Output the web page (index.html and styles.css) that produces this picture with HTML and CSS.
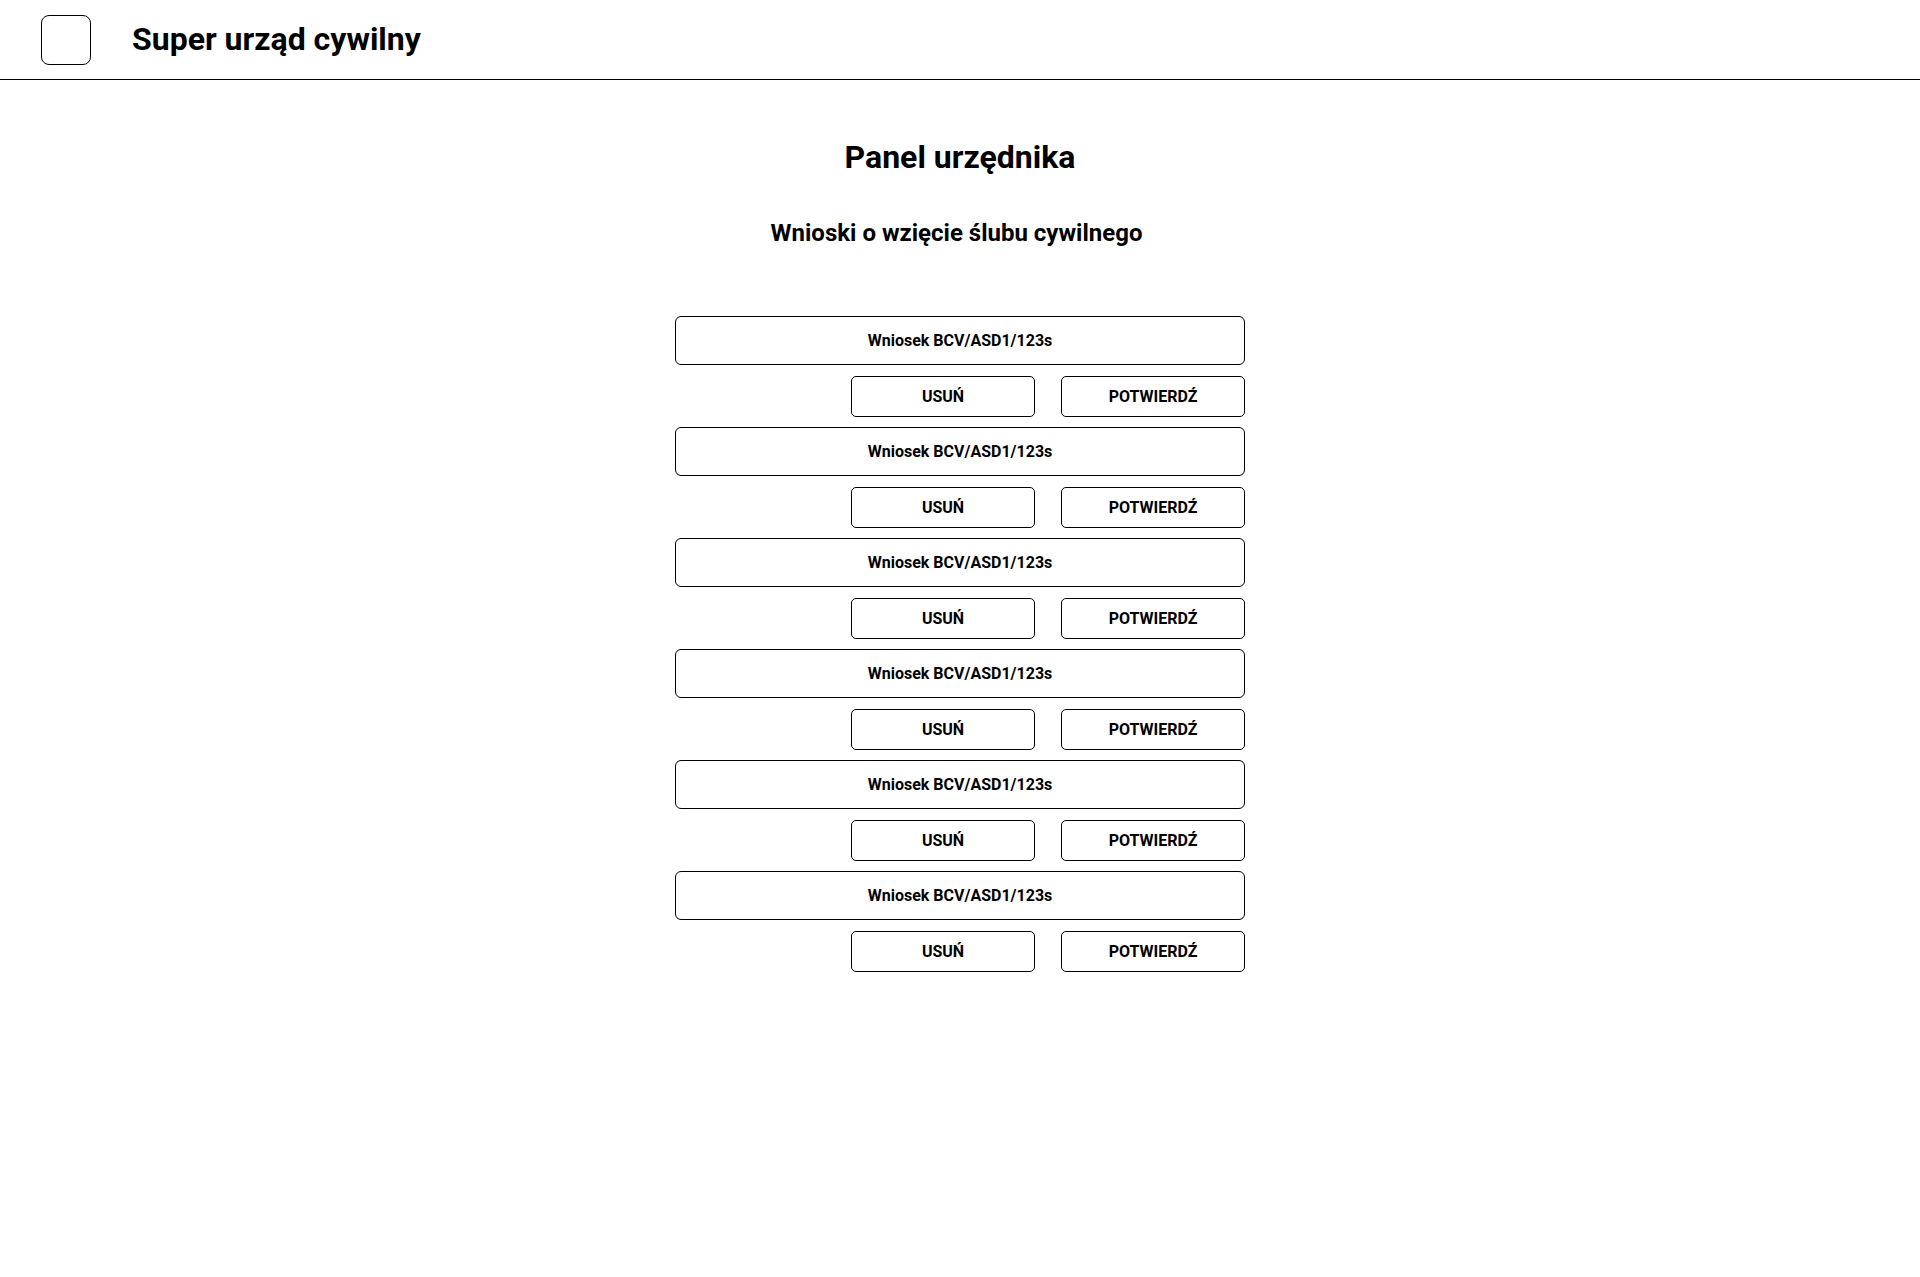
FILE: index.html
```html
<!DOCTYPE html>
<html lang="pl">
<head>
<meta charset="utf-8">
<title>Super urząd cywilny</title>
<link rel="stylesheet" href="styles.css">
</head>
<body>
<header class="topbar">
  <div class="logo"></div>
  <div class="brand">Super urząd cywilny</div>
</header>
<main class="main">
  <h1 class="title">Panel urzędnika</h1>
  <h2 class="subtitle">Wnioski o wzięcie ślubu cywilnego</h2>
  <div class="list">
    <div class="item"><div class="request">Wniosek BCV/ASD1/123s</div><div class="actions"><button class="btn">USUŃ</button><button class="btn">POTWIERDŹ</button></div></div>
    <div class="item"><div class="request">Wniosek BCV/ASD1/123s</div><div class="actions"><button class="btn">USUŃ</button><button class="btn">POTWIERDŹ</button></div></div>
    <div class="item"><div class="request">Wniosek BCV/ASD1/123s</div><div class="actions"><button class="btn">USUŃ</button><button class="btn">POTWIERDŹ</button></div></div>
    <div class="item"><div class="request">Wniosek BCV/ASD1/123s</div><div class="actions"><button class="btn">USUŃ</button><button class="btn">POTWIERDŹ</button></div></div>
    <div class="item"><div class="request">Wniosek BCV/ASD1/123s</div><div class="actions"><button class="btn">USUŃ</button><button class="btn">POTWIERDŹ</button></div></div>
    <div class="item"><div class="request">Wniosek BCV/ASD1/123s</div><div class="actions"><button class="btn">USUŃ</button><button class="btn">POTWIERDŹ</button></div></div>
  </div>
</main>
</body>
</html>
```
FILE: styles.css
```css
* { box-sizing: border-box; }
html, body { margin: 0; padding: 0; background: #fff; }
body { font-family: Roboto, "Liberation Sans", sans-serif; color: #000; }

.topbar {
  display: flex;
  align-items: center;
  height: 80px;
  padding-left: 41px;
  border-bottom: 1px solid #000;
}
.logo {
  width: 50px;
  height: 50px;
  border: 1px solid #000;
  border-radius: 8px;
}
.brand {
  margin-left: 41px;
  margin-bottom: 1px;
  font-size: 32px;
  font-weight: 700;
  line-height: 38px;
}

.main { display: flex; flex-direction: column; align-items: center; }
.title {
  margin: 57px 0 0;
  font-size: 32px;
  line-height: 40px;
  font-weight: 700;
}
.subtitle {
  margin: 42px 0 0;
  padding-right: 7px;
  font-size: 24px;
  line-height: 28px;
  font-weight: 700;
}
.list {
  width: 570px;
  margin-top: 69px;
  display: flex;
  flex-direction: column;
  gap: 10px;
}
.item { display: flex; flex-direction: column; gap: 11px; }
.request {
  height: 49px;
  border: 1px solid #000;
  border-radius: 6px;
  display: flex;
  align-items: center;
  justify-content: center;
  font-size: 16px;
  font-weight: 700;
}
.actions { display: flex; justify-content: flex-end; gap: 26px; }
.btn {
  width: 184px;
  height: 41px;
  background: #fff;
  border: 1px solid #000;
  border-radius: 5px;
  font-family: Roboto, "Liberation Sans", sans-serif;
  font-size: 16px;
  font-weight: 700;
  color: #000;
  padding: 0;
}
```
